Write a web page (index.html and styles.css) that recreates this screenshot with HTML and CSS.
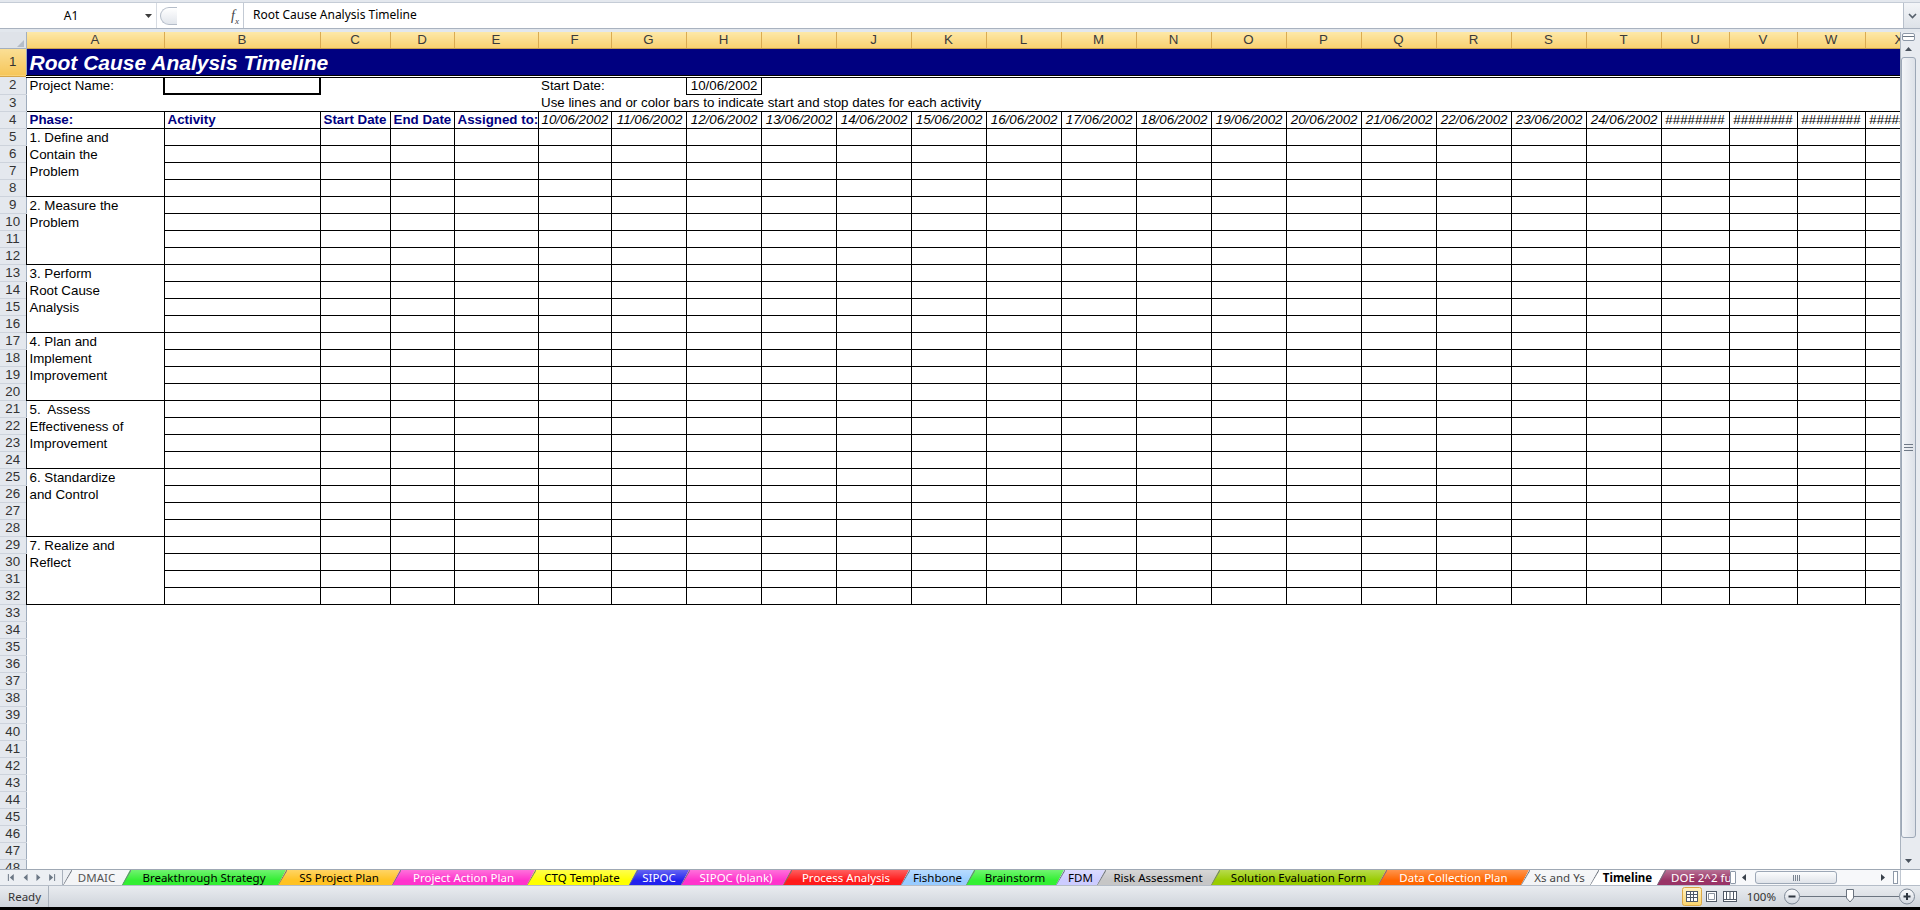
FILE: index.html
```html
<!DOCTYPE html>
<html lang="en">
<head>
<meta charset="utf-8">
<title>Root Cause Analysis Timeline</title>
<link rel="stylesheet" href="styles.css">
</head>
<body>
<div class="app">
  <div class="ribbon-edge"></div>
  <div class="fbar">
    <div class="namebox">
      <span class="nb-text">A1</span>
      <svg class="nb-arrow" width="7" height="4" viewBox="0 0 7 4"><path d="M0 0H7L3.5 4Z" fill="#3c3c3c"/></svg>
    </div>
    <div class="fbar-mid">
      <div class="pill"></div>
      <span class="fx"><i>f</i><sub>x</sub></span>
    </div>
    <div class="finput">Root Cause Analysis Timeline</div>
    <div class="fexpand"><svg width="9" height="6" viewBox="0 0 9 6"><path d="M1 1L4.5 4.5L8 1" fill="none" stroke="#56606c" stroke-width="1.6"/></svg></div>
  </div>
  <div class="fgap"></div>
  <div class="sheet-row">
    <div class="grid-wrap">
      <table class="sheet">
        <colgroup>
          <col class="c-rh"><col class="c-a"><col class="c-b"><col class="c-c"><col class="c-d"><col class="c-e"><col class="c-f">
          <col class="c-g"><col class="c-g"><col class="c-g"><col class="c-g"><col class="c-g"><col class="c-g"><col class="c-g">
          <col class="c-g"><col class="c-g"><col class="c-g"><col class="c-g"><col class="c-g"><col class="c-g"><col class="c-g">
          <col class="c-u"><col class="c-u"><col class="c-u"><col class="c-u">
        </colgroup>
        <thead>
          <tr class="r-ch">
            <th class="corner"><svg width="7" height="7" viewBox="0 0 7 7"><path d="M7 0V7H0Z" fill="#b4bcc7"/></svg></th>
            <th class="ch">A</th><th class="ch">B</th><th class="ch">C</th><th class="ch">D</th><th class="ch">E</th><th class="ch">F</th>
            <th class="ch">G</th><th class="ch">H</th><th class="ch">I</th><th class="ch">J</th><th class="ch">K</th><th class="ch">L</th>
            <th class="ch">M</th><th class="ch">N</th><th class="ch">O</th><th class="ch">P</th><th class="ch">Q</th><th class="ch">R</th>
            <th class="ch">S</th><th class="ch">T</th><th class="ch">U</th><th class="ch">V</th><th class="ch">W</th><th class="ch">X</th>
          </tr>
        </thead>
        <tbody>
          <tr class="r1"><th class="rh sel">1</th><td class="title" colspan="24">Root Cause Analysis Timeline</td></tr>
          <tr class="r2"><th class="rh">2</th><td>Project Name:</td><td class="box2"></td><td></td><td></td><td></td><td>Start Date:</td><td></td><td class="box1">10/06/2002</td><td colspan="16"></td></tr>
          <tr><th class="rh">3</th><td colspan="5"></td><td colspan="19">Use lines and or color bars to indicate start and stop dates for each activity</td></tr>
        </tbody>
        <tbody class="b">
          <tr>
            <th class="rh">4</th>
            <td class="hd">Phase:</td><td class="hd">Activity</td><td class="hd">Start Date</td><td class="hd">End Date</td><td class="hd">Assigned to:</td>
            <td class="dt">10/06/2002</td><td class="dt">11/06/2002</td><td class="dt">12/06/2002</td><td class="dt">13/06/2002</td><td class="dt">14/06/2002</td>
            <td class="dt">15/06/2002</td><td class="dt">16/06/2002</td><td class="dt">17/06/2002</td><td class="dt">18/06/2002</td><td class="dt">19/06/2002</td>
            <td class="dt">20/06/2002</td><td class="dt">21/06/2002</td><td class="dt">22/06/2002</td><td class="dt">23/06/2002</td><td class="dt">24/06/2002</td>
            <td class="hash">########</td><td class="hash">########</td><td class="hash">########</td><td class="hash">########</td>
          </tr>
          <tr><th class="rh">5</th><td class="ph" rowspan="4">1. Define and<br>Contain the<br>Problem</td><td></td><td></td><td></td><td></td><td></td><td></td><td></td><td></td><td></td><td></td><td></td><td></td><td></td><td></td><td></td><td></td><td></td><td></td><td></td><td></td><td></td><td></td><td></td></tr>
          <tr><th class="rh">6</th><td></td><td></td><td></td><td></td><td></td><td></td><td></td><td></td><td></td><td></td><td></td><td></td><td></td><td></td><td></td><td></td><td></td><td></td><td></td><td></td><td></td><td></td><td></td></tr>
          <tr><th class="rh">7</th><td></td><td></td><td></td><td></td><td></td><td></td><td></td><td></td><td></td><td></td><td></td><td></td><td></td><td></td><td></td><td></td><td></td><td></td><td></td><td></td><td></td><td></td><td></td></tr>
          <tr><th class="rh">8</th><td></td><td></td><td></td><td></td><td></td><td></td><td></td><td></td><td></td><td></td><td></td><td></td><td></td><td></td><td></td><td></td><td></td><td></td><td></td><td></td><td></td><td></td><td></td></tr>
          <tr><th class="rh">9</th><td class="ph" rowspan="4">2. Measure the<br>Problem</td><td></td><td></td><td></td><td></td><td></td><td></td><td></td><td></td><td></td><td></td><td></td><td></td><td></td><td></td><td></td><td></td><td></td><td></td><td></td><td></td><td></td><td></td><td></td></tr>
          <tr><th class="rh">10</th><td></td><td></td><td></td><td></td><td></td><td></td><td></td><td></td><td></td><td></td><td></td><td></td><td></td><td></td><td></td><td></td><td></td><td></td><td></td><td></td><td></td><td></td><td></td></tr>
          <tr><th class="rh">11</th><td></td><td></td><td></td><td></td><td></td><td></td><td></td><td></td><td></td><td></td><td></td><td></td><td></td><td></td><td></td><td></td><td></td><td></td><td></td><td></td><td></td><td></td><td></td></tr>
          <tr><th class="rh">12</th><td></td><td></td><td></td><td></td><td></td><td></td><td></td><td></td><td></td><td></td><td></td><td></td><td></td><td></td><td></td><td></td><td></td><td></td><td></td><td></td><td></td><td></td><td></td></tr>
          <tr><th class="rh">13</th><td class="ph" rowspan="4">3. Perform<br>Root Cause<br>Analysis</td><td></td><td></td><td></td><td></td><td></td><td></td><td></td><td></td><td></td><td></td><td></td><td></td><td></td><td></td><td></td><td></td><td></td><td></td><td></td><td></td><td></td><td></td><td></td></tr>
          <tr><th class="rh">14</th><td></td><td></td><td></td><td></td><td></td><td></td><td></td><td></td><td></td><td></td><td></td><td></td><td></td><td></td><td></td><td></td><td></td><td></td><td></td><td></td><td></td><td></td><td></td></tr>
          <tr><th class="rh">15</th><td></td><td></td><td></td><td></td><td></td><td></td><td></td><td></td><td></td><td></td><td></td><td></td><td></td><td></td><td></td><td></td><td></td><td></td><td></td><td></td><td></td><td></td><td></td></tr>
          <tr><th class="rh">16</th><td></td><td></td><td></td><td></td><td></td><td></td><td></td><td></td><td></td><td></td><td></td><td></td><td></td><td></td><td></td><td></td><td></td><td></td><td></td><td></td><td></td><td></td><td></td></tr>
          <tr><th class="rh">17</th><td class="ph" rowspan="4">4. Plan and<br>Implement<br>Improvement</td><td></td><td></td><td></td><td></td><td></td><td></td><td></td><td></td><td></td><td></td><td></td><td></td><td></td><td></td><td></td><td></td><td></td><td></td><td></td><td></td><td></td><td></td><td></td></tr>
          <tr><th class="rh">18</th><td></td><td></td><td></td><td></td><td></td><td></td><td></td><td></td><td></td><td></td><td></td><td></td><td></td><td></td><td></td><td></td><td></td><td></td><td></td><td></td><td></td><td></td><td></td></tr>
          <tr><th class="rh">19</th><td></td><td></td><td></td><td></td><td></td><td></td><td></td><td></td><td></td><td></td><td></td><td></td><td></td><td></td><td></td><td></td><td></td><td></td><td></td><td></td><td></td><td></td><td></td></tr>
          <tr><th class="rh">20</th><td></td><td></td><td></td><td></td><td></td><td></td><td></td><td></td><td></td><td></td><td></td><td></td><td></td><td></td><td></td><td></td><td></td><td></td><td></td><td></td><td></td><td></td><td></td></tr>
          <tr><th class="rh">21</th><td class="ph" rowspan="4">5.&nbsp; Assess<br>Effectiveness of<br>Improvement</td><td></td><td></td><td></td><td></td><td></td><td></td><td></td><td></td><td></td><td></td><td></td><td></td><td></td><td></td><td></td><td></td><td></td><td></td><td></td><td></td><td></td><td></td><td></td></tr>
          <tr><th class="rh">22</th><td></td><td></td><td></td><td></td><td></td><td></td><td></td><td></td><td></td><td></td><td></td><td></td><td></td><td></td><td></td><td></td><td></td><td></td><td></td><td></td><td></td><td></td><td></td></tr>
          <tr><th class="rh">23</th><td></td><td></td><td></td><td></td><td></td><td></td><td></td><td></td><td></td><td></td><td></td><td></td><td></td><td></td><td></td><td></td><td></td><td></td><td></td><td></td><td></td><td></td><td></td></tr>
          <tr><th class="rh">24</th><td></td><td></td><td></td><td></td><td></td><td></td><td></td><td></td><td></td><td></td><td></td><td></td><td></td><td></td><td></td><td></td><td></td><td></td><td></td><td></td><td></td><td></td><td></td></tr>
          <tr><th class="rh">25</th><td class="ph" rowspan="4">6. Standardize<br>and Control</td><td></td><td></td><td></td><td></td><td></td><td></td><td></td><td></td><td></td><td></td><td></td><td></td><td></td><td></td><td></td><td></td><td></td><td></td><td></td><td></td><td></td><td></td><td></td></tr>
          <tr><th class="rh">26</th><td></td><td></td><td></td><td></td><td></td><td></td><td></td><td></td><td></td><td></td><td></td><td></td><td></td><td></td><td></td><td></td><td></td><td></td><td></td><td></td><td></td><td></td><td></td></tr>
          <tr><th class="rh">27</th><td></td><td></td><td></td><td></td><td></td><td></td><td></td><td></td><td></td><td></td><td></td><td></td><td></td><td></td><td></td><td></td><td></td><td></td><td></td><td></td><td></td><td></td><td></td></tr>
          <tr><th class="rh">28</th><td></td><td></td><td></td><td></td><td></td><td></td><td></td><td></td><td></td><td></td><td></td><td></td><td></td><td></td><td></td><td></td><td></td><td></td><td></td><td></td><td></td><td></td><td></td></tr>
          <tr><th class="rh">29</th><td class="ph" rowspan="4">7. Realize and<br>Reflect</td><td></td><td></td><td></td><td></td><td></td><td></td><td></td><td></td><td></td><td></td><td></td><td></td><td></td><td></td><td></td><td></td><td></td><td></td><td></td><td></td><td></td><td></td><td></td></tr>
          <tr><th class="rh">30</th><td></td><td></td><td></td><td></td><td></td><td></td><td></td><td></td><td></td><td></td><td></td><td></td><td></td><td></td><td></td><td></td><td></td><td></td><td></td><td></td><td></td><td></td><td></td></tr>
          <tr><th class="rh">31</th><td></td><td></td><td></td><td></td><td></td><td></td><td></td><td></td><td></td><td></td><td></td><td></td><td></td><td></td><td></td><td></td><td></td><td></td><td></td><td></td><td></td><td></td><td></td></tr>
          <tr><th class="rh">32</th><td></td><td></td><td></td><td></td><td></td><td></td><td></td><td></td><td></td><td></td><td></td><td></td><td></td><td></td><td></td><td></td><td></td><td></td><td></td><td></td><td></td><td></td><td></td></tr>
        </tbody>
        <tbody>
          <tr><th class="rh">33</th><td colspan="24"></td></tr>
          <tr><th class="rh">34</th><td colspan="24"></td></tr>
          <tr><th class="rh">35</th><td colspan="24"></td></tr>
          <tr><th class="rh">36</th><td colspan="24"></td></tr>
          <tr><th class="rh">37</th><td colspan="24"></td></tr>
          <tr><th class="rh">38</th><td colspan="24"></td></tr>
          <tr><th class="rh">39</th><td colspan="24"></td></tr>
          <tr><th class="rh">40</th><td colspan="24"></td></tr>
          <tr><th class="rh">41</th><td colspan="24"></td></tr>
          <tr><th class="rh">42</th><td colspan="24"></td></tr>
          <tr><th class="rh">43</th><td colspan="24"></td></tr>
          <tr><th class="rh">44</th><td colspan="24"></td></tr>
          <tr><th class="rh">45</th><td colspan="24"></td></tr>
          <tr><th class="rh">46</th><td colspan="24"></td></tr>
          <tr><th class="rh">47</th><td colspan="24"></td></tr>
          <tr><th class="rh">48</th><td colspan="24"></td></tr>
        </tbody>
      </table>
    </div>
    <div class="vscroll">
      <div class="vs-split"></div>
      <div class="vs-btn"><svg width="7" height="4" viewBox="0 0 7 4"><path d="M0 4L3.5 0L7 4Z" fill="#4a525d"/></svg></div>
      <div class="vs-thumb"><svg width="9" height="7" viewBox="0 0 9 7"><path d="M0 0.5H9M0 3.5H9M0 6.5H9" stroke="#6f7986"/></svg></div>
      <div class="vs-gap"></div>
      <div class="vs-btn"><svg width="7" height="4" viewBox="0 0 7 4"><path d="M0 0H7L3.5 4Z" fill="#4a525d"/></svg></div>
    </div>
  </div>
  <div class="tabbar">
    <div class="tabnav">
      <svg width="63" height="15" viewBox="0 0 63 15">
        <g fill="#6a7684">
          <rect x="8" y="4" width="1" height="7"/>
          <path d="M14 4V11L10 7.5Z"/>
          <path d="M28 4V11L24 7.5Z"/>
          <path d="M37 4V11L41 7.5Z"/>
          <path d="M50 4V11L54 7.5Z"/>
          <rect x="55" y="4" width="1" height="7"/>
        </g>
      </svg>
    </div>
    <div class="tabs">
      <div class="tab t-dmaic">DMAIC</div>
      <div class="tab t-break">Breakthrough Strategy</div>
      <div class="tab t-ss">SS Project Plan</div>
      <div class="tab t-pap">Project Action Plan</div>
      <div class="tab t-ctq">CTQ Template</div>
      <div class="tab t-sipoc">SIPOC</div>
      <div class="tab t-sipocb">SIPOC (blank)</div>
      <div class="tab t-proc">Process Analysis</div>
      <div class="tab t-fish">Fishbone</div>
      <div class="tab t-brain">Brainstorm</div>
      <div class="tab t-fdm">FDM</div>
      <div class="tab t-risk">Risk Assessment</div>
      <div class="tab t-sol">Solution Evaluation Form</div>
      <div class="tab t-dcp">Data Collection Plan</div>
      <div class="tab t-xs">Xs and Ys</div>
      <div class="tab t-time">Timeline</div>
      <div class="tab t-doe">DOE 2^2 full factorial</div>
    </div>
    <div class="hsplit"></div>
    <div class="hscroll">
      <div class="hs-btn"><svg width="4" height="7" viewBox="0 0 4 7"><path d="M4 0V7L0 3.5Z" fill="#39414b"/></svg></div>
      <div class="hs-thumb"><svg width="7" height="6" viewBox="0 0 7 6"><path d="M0.5 0V6M2.5 0V6M4.5 0V6M6.5 0V6" stroke="#7a8491"/></svg></div>
      <div class="hs-space"></div>
      <div class="hs-btn"><svg width="4" height="7" viewBox="0 0 4 7"><path d="M0 0V7L4 3.5Z" fill="#39414b"/></svg></div>
      <div class="hs-end"></div>
    </div>
    <div class="hcorner"></div>
  </div>
  <div class="status">
    <span class="ready">Ready</span>
    <div class="views">
      <svg width="56" height="19" viewBox="0 0 56 19">
        <defs><linearGradient id="vg" x1="0" y1="0" x2="0" y2="1"><stop offset="0" stop-color="#fff3c4"/><stop offset="1" stop-color="#fbd46a"/></linearGradient></defs>
        <rect x="0.5" y="0.5" width="19" height="18" rx="2" fill="url(#vg)" stroke="#dba845"/>
        <rect x="4.5" y="4.5" width="11" height="10" fill="#fff" stroke="#4f5865"/>
        <path d="M4.5 7.5H15.5M4.5 10.5H15.5M8.5 4.5V14.5M11.5 4.5V14.5" stroke="#4f5865"/>
        <rect x="24.5" y="4.5" width="10" height="10" fill="#fff" stroke="#4f5865"/>
        <path d="M26.5 6.5H32.5V12.5H26.5Z" fill="none" stroke="#8a939f"/>
        <rect x="41.5" y="4.5" width="13" height="10" fill="#fff" stroke="#4f5865"/>
        <path d="M48 4.5V12.5M41.5 12.5H54.5M44.5 4.5V12.5M51.5 4.5V12.5" stroke="#4f5865"/>
      </svg>
    </div>
    <span class="zoompct">100%</span>
    <svg class="zoomctl" width="138" height="21" viewBox="0 0 138 21">
      <defs><linearGradient id="zg" x1="0" y1="0" x2="0" y2="1"><stop offset="0" stop-color="#fdfdfe"/><stop offset="1" stop-color="#cfd5de"/></linearGradient></defs>
      <path d="M18 10.5H117" stroke="#6b7480"/>
      <circle cx="10" cy="10.5" r="7.5" fill="url(#zg)" stroke="#7d8896"/>
      <path d="M6.5 10.5H13.5" stroke="#2f3640" stroke-width="2"/>
      <path d="M64.5 3.5H71.5V12L68 16L64.5 12Z" fill="#fff" stroke="#6b7480"/>
      <circle cx="125" cy="10.5" r="7.5" fill="url(#zg)" stroke="#7d8896"/>
      <path d="M121.5 10.5H128.5M125 7V14" stroke="#2f3640" stroke-width="2"/>
    </svg>
  </div>
  <div class="taskbar"></div>
</div>
</body>
</html>
```

FILE: styles.css
```css
* { box-sizing: border-box; }
html, body { margin: 0; padding: 0; }
body {
  width: 1920px; height: 910px; overflow: hidden; background: #fff;
  font-family: "Liberation Sans", Arial, sans-serif; color: #000;
}
.app { display: flex; flex-direction: column; width: 1920px; height: 910px; }

/* formula bar */
.ribbon-edge { flex: 0 0 3px; background: #e4e8ee; border-bottom: 1px solid #c5ccd6; }
.fbar { flex: 0 0 26px; display: flex; background: #fff; border-bottom: 1px solid #a9b2bf; }
.namebox { width: 157px; display: flex; align-items: center; border-right: 1px solid #d6dbe2; }
.nb-text { width: 142px; text-align: center; font: 12px "Noto Sans", sans-serif; color: #000; }
.nb-arrow { margin-left: 3px; }
.fbar-mid { width: 86px; display: flex; align-items: center; }
.pill {
  width: 17px; height: 18px; margin-left: 3px;
  border: 1px solid #b5bdc9; border-right: none; border-radius: 9px 0 0 9px;
  background: linear-gradient(#ffffff, #e2e6ec);
}
.fx { margin-left: auto; margin-right: 4px; font: italic 14px "Liberation Serif", serif; color: #444; line-height: 14px; }
.fx sub { font-size: 9px; line-height: 0; }
.finput {
  flex: 1; border-left: 1px solid #c3cad4; padding-left: 9px;
  font: 12px "Noto Sans", sans-serif; line-height: 24px; white-space: nowrap;
}
.fexpand {
  width: 17px; display: flex; align-items: center; justify-content: center;
  background: linear-gradient(#f3f5f8, #dde2e8); border-left: 1px solid #b8c0cb;
}
.fgap { flex: 0 0 3px; background: #e2e7ed; }

/* sheet */
.sheet-row { flex: 0 0 837px; display: flex; }
.grid-wrap { width: 1900px; height: 837px; overflow: hidden; }
.sheet { border-collapse: collapse; table-layout: fixed; width: 1933px; font-size: 13.33px; }
.c-rh { width: 26px; }
.c-a { width: 138px; }
.c-b { width: 156px; }
.c-c { width: 70px; }
.c-d { width: 64px; }
.c-e { width: 84px; }
.c-f { width: 73px; }
.c-g { width: 75px; }
.c-u { width: 68px; }
.sheet tr { height: 17px; }
.sheet .r-ch { height: 16px; }
.sheet .r1 { height: 28px; }
.sheet .r2 { height: 18px; }
.sheet td, .sheet th {
  padding: 0 3px; line-height: 16px; white-space: nowrap; overflow: hidden;
  text-align: left; vertical-align: bottom; font-weight: normal;
}
.sheet .corner {
  background: #dfe3e9; border-right: 1px solid #a3afbe; border-bottom: 1px solid #a3afbe;
  text-align: right; padding: 0 2px 1px 0; line-height: 7px;
}
.sheet .ch {
  background: linear-gradient(#fde8a8, #f9d170);
  border-right: 1px solid #daab52; border-bottom: 1px solid #c89f4d;
  color: #3a3a3a; text-align: center; padding: 0; vertical-align: middle; line-height: 15px;
}
.sheet .rh {
  background: #e4e8ee; border-bottom: 1px solid #cdd3dc; border-right: 1px solid #9eabbb;
  color: #333; text-align: center; padding: 0; vertical-align: middle;
}
.sheet .rh.sel { background: linear-gradient(#fadf96, #f6c65a); border-bottom-color: #d6a64a; }
.sheet .title {
  background: #000080; color: #fff; font-weight: bold; font-style: italic;
  font-size: 21px; line-height: 24px; border-bottom: 3px double #000; padding-left: 3px;
}
.sheet .box2 { border: 2px solid #000; }
.sheet .box1 { border: 1px solid #000; text-align: right; }
.sheet .b td { border: 1px solid #000; }
.sheet .ph { vertical-align: top; line-height: 17px; }
.sheet .hd { color: #000080; font-weight: bold; }
.sheet .dt { font-style: italic; text-align: right; }
.sheet .hash { text-align: center; padding: 0; }

/* vertical scrollbar */
.vscroll {
  width: 20px; height: 837px; display: flex; flex-direction: column;
  background: #e8ebf0; border-left: 1px solid #aab3bf; padding-right: 4px;
}
.vs-split {
  height: 8px; margin: 1px 1px 0; border: 1px solid #8d98a7; border-radius: 2px;
  background: linear-gradient(#fff 0 2px, #6d7886 2px 3px, #fff 3px);
}
.vs-btn { height: 16px; display: flex; align-items: center; justify-content: center; }
.vs-btn:last-child { height: 17px; }
.vs-thumb {
  height: 781px; border: 1px solid #9ca7b6; border-radius: 3px;
  background: linear-gradient(to right, #f3f5f8, #dde1e8);
  display: flex; align-items: center; justify-content: center;
}
.vs-gap { height: 14px; }

/* sheet tabs */
.tabbar {
  flex: 0 0 17px; display: flex; background: #eceff3;
  border-top: 1px solid #9fa8b4; border-bottom: 1px solid #b5bdc8;
}
.tabnav { width: 63px; display: flex; align-items: center; border-right: 1px solid #a9b1bc; }
.tabs { width: 1667px; display: flex; overflow: hidden; }
.tab {
  position: relative;
  flex: 0 0 auto; height: 15px; margin-right: -8px;
  clip-path: polygon(0 100%, 8px 0, 100% 0, calc(100% - 8px) 100%);
  font: 11.5px "Noto Sans", sans-serif; line-height: 15px; text-align: center;
  white-space: nowrap; overflow: hidden; color: #000;
  background-image: linear-gradient(rgba(255,255,255,0.3), rgba(255,255,255,0) 70%);
}
.tab::before {
  content: ""; position: absolute; left: 0; top: 0; width: 9px; height: 15px;
  background: linear-gradient(to top left, transparent calc(50% - 1px), #6f7680 50%, transparent calc(50% + 1px));
}
.t-dmaic { width: 67px; background-color: #f3f4f6; color: #555; }
.t-break { width: 164px; background-color: #33ee33; }
.t-ss { width: 122px; background-color: #ffc222; }
.t-pap { width: 143px; background-color: #ff33cc; color: #fff; }
.t-ctq { width: 110px; background-color: #ffff00; }
.t-sipoc { width: 60px; background-color: #2222ee; color: #fff; }
.t-sipocb { width: 110px; background-color: #ff33cc; color: #fff; }
.t-proc { width: 126px; background-color: #ff1a1a; color: #fff; }
.t-fish { width: 73px; background-color: #99ccff; }
.t-brain { width: 98px; background-color: #33f033; }
.t-fdm { width: 49px; background-color: #ccccff; }
.t-risk { width: 122px; background-color: #c6c6c6; }
.t-sol { width: 175px; background-color: #99cc00; }
.t-dcp { width: 151px; background-color: #ff6600; color: #fff; }
.t-xs { width: 77px; background-color: #f3f4f6; color: #444; }
.t-time { width: 75px; background: #fff; font-weight: bold; }
.t-doe { width: 150px; background-color: #993366; color: #fff; text-align: left; padding-left: 14px; }

.hsplit { width: 6px; margin: 1px 0; border: 1px solid #8e99a8; border-radius: 1px; background: #fff; }
.hscroll { width: 164px; display: flex; align-items: center; background: #f7f8fa; }
.hs-btn { width: 16px; height: 13px; display: flex; align-items: center; justify-content: center; }
.hs-thumb {
  width: 82px; height: 13px; margin-left: 3px; border: 1px solid #9ca7b6; border-radius: 3px;
  background: linear-gradient(#fbfcfd, #dfe3e9);
  display: flex; align-items: center; justify-content: center;
}
.hs-space { width: 38px; }
.hs-end { width: 5px; height: 13px; margin: 0 2px; border: 1px solid #8e99a8; background: #fff; }
.hcorner { width: 20px; background: #fff; border-left: 1px solid #c0c7d1; }

/* status bar */
.status {
  flex: 0 0 21px; display: flex; align-items: center;
  background: linear-gradient(#e9ecf0, #cfd4db);
  font: 11.5px "Noto Sans", sans-serif; color: #333;
}
.ready { width: 49px; height: 100%; padding-left: 8px; line-height: 21px; border-right: 1px solid #aab2bd; }
.views { margin-left: auto; margin-right: 9px; display: flex; }
.zoompct { margin-right: 6px; }
.zoomctl { display: block; }
.taskbar { flex: 0 0 3px; background: #000; }
```
